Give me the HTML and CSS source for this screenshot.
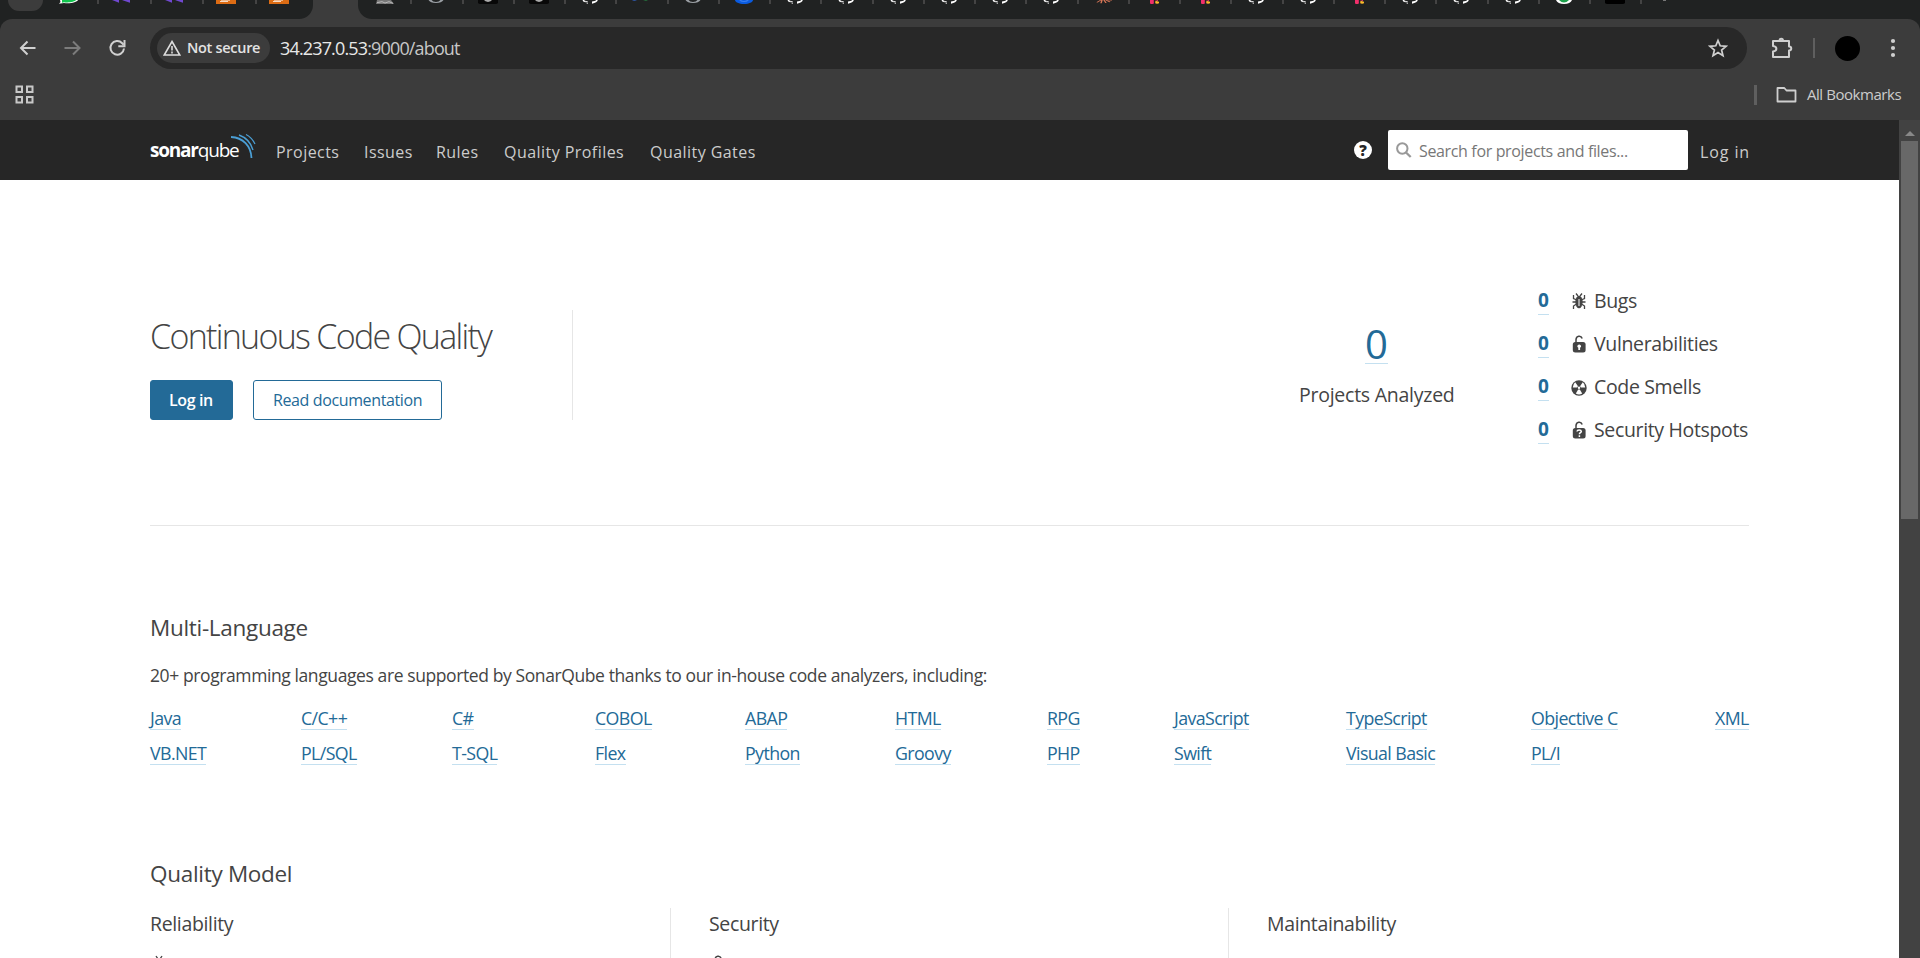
FILE: index.html
```html
<!DOCTYPE html>
<html lang="en">
<head>
<meta charset="utf-8">
<title>SonarQube</title>
<link rel="stylesheet" href="styles.css">
</head>
<body>
<svg class="defs" width="0" height="0">
  <symbol id="gh" viewBox="0 0 20 12" preserveAspectRatio="none"><path d="M2.500 0C3 5 5 9 8 11V8.500C5.500 9 4.500 7 3.800 6L5.500 5.500 7.500 6.500 8 4.500 5 2 4 0ZM16 0 15.500 2 12 4.500V11C15.500 9 17.500 5 17.800 0Z" fill="#fff"/></symbol>
  <symbol id="hr" viewBox="0 0 20 12" preserveAspectRatio="none"><path d="M6 0h3.800v7.500a1.900 3.500 0 0 1-3.800 2z" fill="#f22f6b"/><path d="M11.500 2l3.500 3v4a1.900 2.500 0 0 1-3.800 0z" fill="#fbb829"/><path d="M11 0h3v3z" fill="#f22f6b"/></symbol>
  <symbol id="pu" viewBox="0 0 20 12" preserveAspectRatio="none"><path d="M1 0h7v8.500L3 2.500ZM11 0h8v8.500L13 2.500Z" fill="#7048d0"/></symbol>
  <symbol id="aws" viewBox="0 0 20 12" preserveAspectRatio="none"><path d="M0 0h20v12H0z" fill="#dc6c14"/><path d="M5 1.500h9M4 5h8" stroke="#fff" stroke-width="2"/></symbol>
  <symbol id="gr" viewBox="0 0 20 12" preserveAspectRatio="none"><path d="M4 0c2 10 10 10 12 0" stroke="#9ba0a5" stroke-width="3" fill="none"/></symbol>
  <symbol id="bk" viewBox="0 0 20 12" preserveAspectRatio="none"><path d="M0 0h20v8q0 4-4 4H4q-4 0-4-4z" fill="#080808"/><path d="M6 0h8q-1 5-4 6-3-1-4-6z" fill="#aaa"/></symbol>
  <symbol id="unlock" viewBox="0 0 16 18"><path d="M5 8V4.600a3.200 3.600 0 0 1 6.200-1" fill="none" stroke="#444" stroke-width="1.500"/><rect x="1.800" y="7" width="12.800" height="10.500" rx="2.500" fill="#444"/></symbol>
</svg>
<div class="tabs">
  <div class="group pinned">
    <span class="pill"></span>
    <span class="tab"><svg viewBox="0 0 20 12" preserveAspectRatio="none"><path d="M1 0h18c-1 7-8 12-14 9L0 11.500 1.500 6z" fill="#fff"/><path d="M3 0h14c-1 5-7 9-12 6.500L3 8z" fill="#12c64f"/></svg></span>
    <span class="tab"><svg><use href="#pu"/></svg></span>
    <span class="tab"><svg><use href="#pu"/></svg></span>
    <span class="tab"><svg><use href="#aws"/></svg></span>
    <span class="tab last"><svg><use href="#aws"/></svg></span>
  </div>
  <div class="group rest">
    <span class="tab"><svg viewBox="0 0 20 12" preserveAspectRatio="none"><path d="M2 0h14l3 12H1z" fill="#777"/><path d="M2 8l5-3 3 4 4-4 4 5" stroke="#ddd" fill="none"/></svg></span>
    <span class="tab"><svg><use href="#gr"/></svg></span>
    <span class="tab"><svg><use href="#bk"/></svg></span>
    <span class="tab"><svg><use href="#bk"/></svg></span>
    <span class="tab"><svg><use href="#gh"/></svg></span>
    <span class="tab"><svg viewBox="0 0 20 12" preserveAspectRatio="none"><path d="M1 0q2 4 5 0" fill="#3264c8"/><path d="M12 0h5l-2 3z" fill="#25703c"/></svg></span>
    <span class="tab"><svg><use href="#gr"/></svg></span>
    <span class="tab"><svg viewBox="0 0 20 12" preserveAspectRatio="none"><path d="M1 0h18c0 7-4 12-9 12S1 7 1 0z" fill="#0a5be0"/><path d="M6 1c2 4 6 4 8 0" stroke="#4b8bf5" stroke-width="2" fill="none"/></svg></span>
    <span class="tab"><svg><use href="#gh"/></svg></span>
    <span class="tab"><svg><use href="#gh"/></svg></span>
    <span class="tab"><svg><use href="#gh"/></svg></span>
    <span class="tab"><svg><use href="#gh"/></svg></span>
    <span class="tab"><svg><use href="#gh"/></svg></span>
    <span class="tab"><svg><use href="#gh"/></svg></span>
    <span class="tab"><svg viewBox="0 0 20 12" preserveAspectRatio="none"><path d="M8 0 4 7M9 0 8 10M11 0l2 9M13 0l4 6M15 0l4 1" stroke="#d97757" stroke-width="1.500"/></svg></span>
    <span class="tab"><svg><use href="#hr"/></svg></span>
    <span class="tab"><svg><use href="#hr"/></svg></span>
    <span class="tab"><svg><use href="#gh"/></svg></span>
    <span class="tab"><svg><use href="#gh"/></svg></span>
    <span class="tab"><svg><use href="#hr"/></svg></span>
    <span class="tab"><svg><use href="#gh"/></svg></span>
    <span class="tab"><svg><use href="#gh"/></svg></span>
    <span class="tab"><svg><use href="#gh"/></svg></span>
    <span class="tab"><svg viewBox="0 0 20 12" preserveAspectRatio="none"><path d="M2 0h16c-1 8-4 12-8 12S3 8 2 0z" fill="#fff"/><path d="M5 0h10q-5 15-10 0z" fill="#1ca14b"/></svg></span>
    <span class="tab"><svg viewBox="0 0 20 12" preserveAspectRatio="none"><path d="M0 0h20v8q0 4-4 4H4q-4 0-4-4z" fill="#000"/></svg></span>
    <span class="tab last"><svg viewBox="0 0 20 12" preserveAspectRatio="none"><path d="M7 0h3v3H7z" fill="#777"/></svg></span>
  </div>
</div>
<div class="chrome">
  <div class="toolbar">
    <svg class="nav-ic" viewBox="0 0 20 20"><path d="M17.500 10H3M9.500 3.500 3 10l6.500 6.500" fill="none" stroke="#d0d0d0" stroke-width="2"/></svg>
    <svg class="nav-ic" viewBox="0 0 20 20"><path d="M1.500 10h15M10 3.500 16.500 10 10 16.500" fill="none" stroke="#7c7c7c" stroke-width="2"/></svg>
    <svg class="nav-ic" viewBox="0 0 20 20"><path d="M16 10.500A6.800 6.800 0 1 1 14.200 5.200l1.500 1.600" fill="none" stroke="#d0d0d0" stroke-width="2"/><path d="M16.500 2v6.200h-6.200" fill="none" stroke="#d0d0d0" stroke-width="2"/></svg>
    <div class="omnibox">
      <div class="chip"><svg width="18" height="16" viewBox="0 0 18 16"><path d="M9 1.500 16.800 15H1.200z" fill="none" stroke="#ddd" stroke-width="1.600"/><path d="M9 6v4.500M9 11.500v2" stroke="#ddd" stroke-width="1.600"/></svg><span>Not secure</span></div>
      <div class="url"><span>34.237.0.53</span>:9000/about</div>
      <svg class="star" width="20" height="20" viewBox="0 0 20 20"><path d="m10 2.500 2.200 5.300 5.800.5-4.400 3.700 1.400 5.700-5-3.100-5 3.100L6.400 12 2 8.300l5.800-.5z" fill="none" stroke="#d0d0d0" stroke-width="1.700"/></svg>
    </div>
    <svg class="puzzle" width="22" height="22" viewBox="0 0 22 22"><path d="M2 4h16v5.500c3 0 3 4 0 4V20H2v-5.500c4.500-.5 4.500-5 0-5.500zM8.500 4c0-3 3.500-3 3.500 0" fill="none" stroke="#cfcfcf" stroke-width="2" stroke-linejoin="round"/></svg>
    <span class="bar"></span>
    <span class="avatar"></span>
    <svg class="dots" width="6" height="20" viewBox="0 0 6 20"><g fill="#cfcfcf"><circle cx="3" cy="3" r="2.100"/><circle cx="3" cy="10" r="2.100"/><circle cx="3" cy="17" r="2.100"/></g></svg>
  </div>
  <div class="bookmarks">
    <svg width="20" height="20" viewBox="0 0 20 20"><g fill="none" stroke="#c8c8c8" stroke-width="2"><path d="M1.500 1.500h5.500v5.500H1.500zM12 1.500h5.500v5.500H12zM1.500 12h5.500v5.500H1.500zM12 12h5.500v5.500H12z"/></g></svg>
    <span class="bar"></span>
    <svg width="22" height="18" viewBox="0 0 22 18"><path d="M1.500 2h6.800l2.200 2.500h9v11h-18z" fill="none" stroke="#cfcfcf" stroke-width="1.800" stroke-linejoin="round"/></svg>
    <span class="all">All Bookmarks</span>
  </div>
</div>
<div class="view">
  <main class="page">
    <nav class="nav">
      <div class="logo"><b>sonar</b><i>qube</i><svg width="25" height="25" viewBox="0 0 25 25"><g fill="none" stroke="#4b9fd5"><path d="M0 3C12 3.500 20 12 20.500 24" stroke-width="1.800"/><path d="M8 1C15 3.500 20 9 22 16" stroke-width="1.400"/><path d="M15 .5C19 2.500 22 6 24 10" stroke-width="1.200"/></g></svg></div>
      <a class="m1">Projects</a><a class="m2">Issues</a><a class="m3">Rules</a><a class="m4">Quality Profiles</a><a class="m5">Quality Gates</a>
      <div class="help">?</div>
      <div class="search"><svg width="16" height="16" viewBox="0 0 16 16"><circle cx="6.300" cy="6.500" r="5.200" fill="none" stroke="#999" stroke-width="2"/><path d="m10 10.500 4.700 4.500" stroke="#999" stroke-width="2.300"/></svg><span>Search for projects and files...</span></div>
      <a class="login">Log in</a>
    </nav>
    <section class="hero">
      <div class="intro">
        <h1>Continuous Code Quality</h1>
        <div class="btns"><a class="btn solid">Log in</a><a class="btn">Read documentation</a></div>
      </div>
      <div class="count"><a>0</a><div>Projects Analyzed</div></div>
      <div class="stats">
        <div class="stat"><a>0</a><svg width="16" height="18" viewBox="0 0 16 18"><ellipse cx="8" cy="10" rx="3.600" ry="6.300" fill="#444"/><path d="M5 1.500 7 4M11 1.500 9 4M2.500 3v3.500L6 8M13.500 3v3.500L10 8M1.500 10h13M2.500 17v-3l3-2M13.500 17v-3l-3-2" stroke="#444" stroke-width="1.300" fill="none"/><path d="M8 7v7" stroke="#fff" stroke-width="1"/></svg><span>Bugs</span></div>
        <div class="stat"><a>0</a><svg width="16" height="18"><use href="#unlock"/><path d="M6.500 10.500q1.700-2 3.400 0 .8 1.500-.8 2.200V15H7.300v-2.300q-1.600-.7-.8-2.200z" fill="#fff"/></svg><span>Vulnerabilities</span></div>
        <div class="stat"><a>0</a><svg width="16" height="18" viewBox="0 0 16 18"><circle cx="8" cy="10" r="7.700" fill="#444"/><g fill="#fff"><path d="M7 8.200 4.200 4.200Q1.800 6 1.800 9.500H6z"/><path d="M9 8.200l2.800-4q2.400 1.800 2.400 5.300H10z"/><path d="m7.200 11.500-2.400 4q3.200 1.800 6.400 0l-2.400-4z"/></g><circle cx="8" cy="9.800" r="1.200" fill="#fff"/></svg><span>Code Smells</span></div>
        <div class="stat"><a>0</a><svg width="16" height="18"><use href="#unlock"/><path d="M6 10.500q.2-1.600 2.200-1.600t2.100 1.500c0 1.300-1.900 1.300-1.900 2.800M8.400 14.300v1.700" fill="none" stroke="#fff" stroke-width="1.500"/></svg><span>Security Hotspots</span></div>
      </div>
    </section>
    <section class="langs">
      <h2>Multi-Language</h2>
      <p>20+ programming languages are supported by SonarQube thanks to our in-house code analyzers, including:</p>
      <div class="grid">
        <a>Java</a><a>C/C++</a><a>C#</a><a>COBOL</a><a>ABAP</a><a>HTML</a><a>RPG</a><a>JavaScript</a><a>TypeScript</a><a>Objective C</a><a>XML</a>
        <a>VB.NET</a><a>PL/SQL</a><a>T-SQL</a><a>Flex</a><a>Python</a><a>Groovy</a><a>PHP</a><a>Swift</a><a>Visual Basic</a><a>PL/I</a>
      </div>
    </section>
    <section class="model">
      <h2>Quality Model</h2>
      <div class="cols">
        <div><h3>Reliability</h3><svg width="16" height="18" viewBox="0 0 16 18"><path d="M5 1 7 4M11 1 9 4" stroke="#444" stroke-width="1.300"/></svg></div>
        <div><h3>Security</h3><svg width="16" height="18"><use href="#unlock"/></svg></div>
        <div><h3>Maintainability</h3></div>
      </div>
    </section>
  </main>
  <div class="scroll"><span class="arrow"></span><span class="thumb"></span></div>
</div>
</body>
</html>
```
FILE: styles.css
```css
* { box-sizing: border-box; }
html, body { margin: 0; height: 958px; overflow: hidden; }
body { font-family: "Open Sans", "Noto Sans", sans-serif; color: #444; background: #202222; white-space: nowrap; }
svg { flex: none; display: block; }
.defs { position: absolute; }
a { color: #236a97; }

.tabs { display: flex; height: 19px; background: #3c3c3c; justify-content: space-between; }
.group { display: flex; height: 19px; background: #202222; }
.pinned { width: 313px; padding-left: 8px; border-radius: 0 0 14px 0; }
.pill { width: 35px; height: 11px; background: #3c3c3c; border-radius: 0 0 12px 12px; margin-right: 4px; flex: none; }
.rest { width: 1562px; padding-left: 3px; border-radius: 0 0 0 14px; }
.tab { flex: none; width: 51.250px; height: 4px; border-right: 2px solid #444; padding-left: 14px; }
.pinned .tab { width: 52.400px; padding-left: 12px; }
.tab.last { border: 0; }
.tab svg { width: 20px; height: 4px; overflow: hidden; }

.chrome { height: 101px; background: #3c3c3c; border-radius: 12px 12px 0 0; padding-top: 8px; }
.toolbar { display: flex; align-items: center; height: 42px; padding-left: 18px; }
.nav-ic { width: 20px; height: 20px; margin-right: 25px; }
.omnibox { width: 1597px; height: 42px; margin-left: -3px; background: #282828; border-radius: 21px; display: flex; align-items: center; padding: 0 19px 0 7px; flex: none; }
.chip { width: 113px; height: 30px; border-radius: 15px; background: #3c3c3c; display: flex; align-items: center; padding-left: 6px; gap: 6px; color: #e3e3e3; font-size: 14.500px; font-weight: 600; letter-spacing: -0.3px; }
.chip span { margin-top: -1px; }
.url { margin-left: 10px; font-size: 18px; letter-spacing: -0.85px; color: #c7c7c7; }
.url span { color: #e8e8e8; }
.star { margin-left: auto; }
.puzzle { margin-left: 24px; }
.toolbar .bar { width: 2px; height: 20px; background: #5f5f5f; margin-left: 20px; }
.avatar { width: 25px; height: 25px; border-radius: 50%; background: #000; margin-left: 20px; }
.dots { margin-left: 30px; }
.bookmarks { display: flex; align-items: center; height: 51px; padding: 0 18px 0 15px; }
.bookmarks .bar { width: 3px; height: 20px; background: #5f5f5f; margin-left: auto; margin-right: 19px; }
.all { width: 95px; margin: -2px 0 0 9px; font-size: 15px; letter-spacing: -0.45px; color: #ccc; }

.view { display: flex; height: 838px; }
.page { width: 1899px; background: #fff; overflow: hidden; }
.nav { display: flex; align-items: center; height: 60px; background: #262626; padding-left: 150px; font-size: 16px; letter-spacing: 0.45px; }
.nav a { color: #ccc; flex: none; padding-top: 3px; }
.nav .login { letter-spacing: 0.9px; }
.logo { display: flex; align-items: center; width: 126px; color: #fff; font-size: 19px; line-height: 24px; letter-spacing: -1.2px; flex: none; }
.logo i { font-style: normal; font-weight: 400; }
.logo svg { margin: -8px 0 0 -8px; }
.m1 { width: 88px; }
.m2 { width: 72px; }
.m3 { width: 68px; }
.m4 { width: 146px; }
.m5 { width: 704px; }
.help { width: 18px; height: 18px; background: #fff; color: #262626; border-radius: 50%; font-size: 15px; line-height: 18px; font-weight: 800; text-align: center; flex: none; letter-spacing: 0; }
.search { width: 300px; height: 40px; margin: 0 12px 0 16px; border-radius: 2px; background: #fff; color: #777; display: flex; align-items: center; padding-left: 8px; gap: 7px; flex: none; font-size: 16px; letter-spacing: -0.35px; }
.search span { padding-top: 2px; }

.hero { display: flex; height: 346px; margin: 0 150px; border-bottom: 1px solid #e6e6e6; }
.intro { width: 423px; height: 110px; margin-top: 130px; border-right: 1px solid #e6e6e6; }
h1, h2, h3, p { margin: 0; font-weight: 400; }
h1 { font-size: 34px; line-height: 50px; font-weight: 300; letter-spacing: -1.7px; padding-top: 1px; }
.btns { display: flex; gap: 20px; margin-top: 19px; }
.btn { height: 40px; line-height: 39px; border: 1px solid #236a97; border-radius: 3px; padding: 0 19px; font-size: 16px; letter-spacing: -0.38px; width: 189px; }
.btn.solid { background: #236a97; color: #fff; font-weight: 600; width: 83px; padding: 0 18px; }
.count { width: 155px; margin: 137px 84px 0 auto; text-align: center; font-size: 19.500px; letter-spacing: -0.25px; }
.count a { display: inline-block; font-size: 40px; line-height: 54px; height: 47px; border-bottom: 1px solid #c4e0f0; letter-spacing: 0; }
.count div { line-height: 26px; margin-top: 17px; }
.stats { padding-top: 99px; width: 211px; }
.stat { display: flex; align-items: center; height: 43px; font-size: 19.500px; letter-spacing: -0.35px; }
.stat a { font-weight: 700; font-size: 19px; border-bottom: 1px solid #c4e0f0; line-height: 27px; width: 11px; letter-spacing: 0; }
.stat svg { margin: 0 7px 0 22px; }

.langs { margin: 0 150px; height: 331px; padding-top: 85px; }
h2 { font-size: 22.500px; line-height: 34px; letter-spacing: -0.3px; }
.langs p { font-size: 17.500px; line-height: 26px; margin-top: 17px; letter-spacing: -0.4px; }
.grid { display: grid; grid-template-columns: 151px 151px 143px 150px 150px 152px 127px 172px 185px 184px 34px; row-gap: 11px; margin-top: 18px; }
.grid a { font-size: 17.800px; line-height: 24px; height: 24px; border-bottom: 1px solid #c4e0f0; justify-self: start; letter-spacing: -0.6px; }
.model { margin: 0 150px; }
.cols { display: flex; margin-top: 17px; height: 80px; }
.cols div { width: 558px; padding-left: 38px; border-left: 1px solid #e6e6e6; flex: none; }
.cols div:first-child { width: 520px; padding-left: 0; border: 0; }
h3 { font-size: 19.500px; line-height: 32px; letter-spacing: -0.35px; }
.cols svg { margin: 15px 0 0 1px; }

.scroll { width: 21px; background: #424242; padding: 12px 2px 0; }
.arrow { display: block; width: 10px; height: 5px; margin: -1px 0 0 4px; background: #888; clip-path: polygon(50% 0, 100% 100%, 0 100%); }
.thumb { display: block; width: 17px; height: 378px; margin-top: 5px; background: #686868; }
```
